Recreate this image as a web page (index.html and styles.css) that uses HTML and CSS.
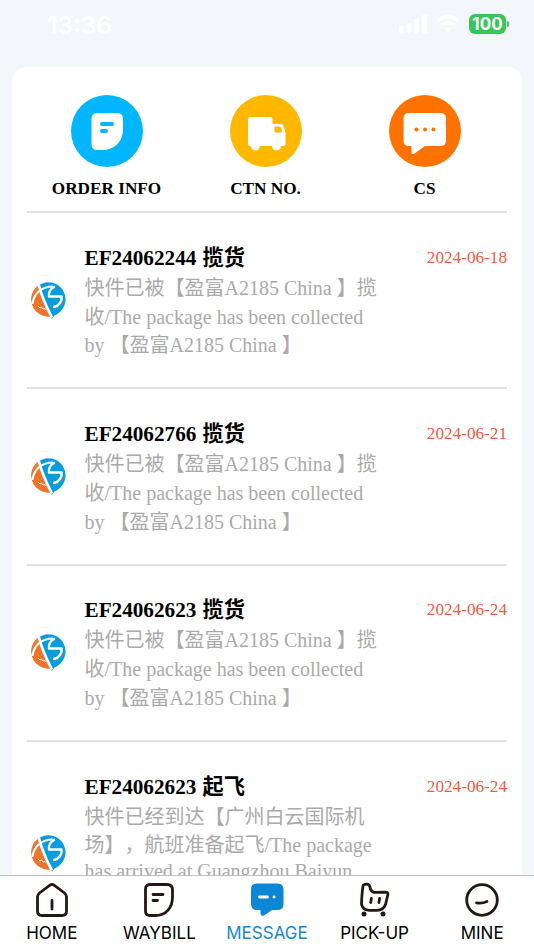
FILE: index.html
```
<!DOCTYPE html>
<html lang="zh-CN">
<head>
<meta charset="utf-8">
<title>Message</title>
<link rel="stylesheet" href="styles.css">
</head>
<body>
<svg class="defs" aria-hidden="true">
  <symbol id="logo" viewBox="0 0 36 38">
    <path d="M9 4A17.200 17.200 0 1 1 24.500 34.500L22 37.800L19 34.500Z" fill="#079be0"/>
    <path d="M9 4A17.200 17.200 0 0 0 20.500 35.500Z" fill="#ee742b"/>
    <path d="M8.500 3Q13 20 22 36.500" stroke="#fff" stroke-width="2.800" fill="none"/>
    <path d="M2.500 22C4 14 10 5.500 22.500 5.500" stroke="#fff" stroke-width="2.200" fill="none" stroke-linecap="round"/>
    <path d="M24 6C20 8 18.500 11 19 15.500H31.500C32.500 20 29 25 24 26" stroke="#fff" stroke-width="2.500" fill="none" stroke-linecap="round" stroke-linejoin="round"/>
    <path d="M8 25l2 2 1.500-1 1.500 2 2-.5 1.500 1.500" stroke="#fff" stroke-width=".9" fill="none"/>
  </symbol>
</svg>
<div class="app">
  <header class="status">
    <span class="time">13:36</span>
    <div class="signals">
      <svg width="28" height="18" viewBox="0 0 28 18" fill="#fff"><rect y="11" width="5" height="7" rx="1.500"/><rect x="7.600" y="8" width="5" height="10" rx="1.500"/><rect x="15.200" y="4" width="5" height="14" rx="1.500"/><rect x="22.800" y="0" width="5" height="18" rx="1.500"/></svg>
      <svg width="24" height="18" viewBox="0 0 24 18" fill="none" stroke="#fff" stroke-width="3.300"><path d="M1.200 6Q12-3 22.800 6M5.200 10.500Q12 5 18.800 10.500"/><path d="M8 13.500Q12 10.500 16 13.500L12 17.500Z" fill="#fff" stroke="none"/></svg>
      <div class="battery"><span class="level">100</span><i class="cap"></i></div>
    </div>
  </header>
  <main class="card">
    <nav class="shortcuts">
      <a class="shortcut"><svg viewBox="0 0 72 72"><circle cx="36" cy="36" r="36" fill="#02b5ff"/><path d="M26 18H46Q52 18 52 24V34C52 47 43 55 31 55H26Q20.500 55 20.500 49V24Q20.500 18 26 18Z" fill="#fff"/><path d="M31 29H41M31 36H35" stroke="#02b5ff" stroke-width="4" stroke-linecap="round"/></svg><b>ORDER INFO</b></a>
      <a class="shortcut"><svg viewBox="0 0 72 72"><circle cx="36" cy="36" r="36" fill="#ffb700"/><path d="M20 22H40.500Q42.500 22 42.500 24V29H50.500Q52.500 29 53.500 31L55.500 37.500V49Q55.500 51 53.500 51H51A4.500 4.500 0 0 1 42 51H30A4.500 4.500 0 0 1 21 51H20Q18 51 18 49V24Q18 22 20 22Z" fill="#fff"/><path d="M45.500 31.500H49.500Q51 31.500 51.500 34L52 37.500H45.500Q44.500 37.500 44.500 36.500V32.500Q44.500 31.500 45.500 31.500Z" fill="#ffb700"/></svg><b>CTN NO.</b></a>
      <a class="shortcut"><svg viewBox="0 0 72 72"><circle cx="36" cy="36" r="36" fill="#ff7200"/><path d="M20 18H51.500Q57 18 57 23.500V45.500Q57 51 51.500 51H36L25.500 58.500Q22.500 60 22.500 57V51H20Q14.500 51 14.500 45.500V23.500Q14.500 18 20 18Z" fill="#fff"/><g fill="#ff7200"><circle cx="27.500" cy="34.500" r="2"/><circle cx="36" cy="34.500" r="2"/><circle cx="44.500" cy="34.500" r="2"/></g></svg><b>CS</b></a>
    </nav>
    <section class="messages">
      <article class="message">
        <svg class="logo"><use href="#logo"/></svg>
        <div class="content"><h2>EF24062244 揽货</h2><p>快件已被【盈富A2185 China 】揽<br>收/The package has been collected<br>by 【盈富A2185 China 】</p></div>
        <time>2024-06-18</time>
      </article>
      <article class="message">
        <svg class="logo"><use href="#logo"/></svg>
        <div class="content"><h2>EF24062766 揽货</h2><p>快件已被【盈富A2185 China 】揽<br>收/The package has been collected<br>by 【盈富A2185 China 】</p></div>
        <time>2024-06-21</time>
      </article>
      <article class="message">
        <svg class="logo"><use href="#logo"/></svg>
        <div class="content"><h2>EF24062623 揽货</h2><p>快件已被【盈富A2185 China 】揽<br>收/The package has been collected<br>by 【盈富A2185 China 】</p></div>
        <time>2024-06-24</time>
      </article>
      <article class="message tall">
        <svg class="logo"><use href="#logo"/></svg>
        <div class="content"><h2>EF24062623 起飞</h2><p>快件已经到达【广州白云国际机<br>场】，航班准备起飞/The package<span class="last">has arrived at Guangzhou Baiyun</span></p></div>
        <time>2024-06-24</time>
      </article>
    </section>
  </main>
  <nav class="tabs">
    <a class="tab"><svg viewBox="0 0 36 36"><path d="M16 3.200Q18 1.800 20 3.200L30.500 11Q32.500 12.600 32.500 15V29Q32.500 33.500 28 33.500H8Q3.500 33.500 3.500 29V15Q3.500 12.600 5.500 11ZM18 18.500V27"/></svg><span>HOME</span></a>
    <a class="tab"><svg viewBox="0 0 36 36"><path d="M9 2.500H26Q31.500 2.500 31.500 8V15C31.500 26 25 33.500 14 33.500H9Q4.500 33.500 4.500 29V7Q4.500 2.500 9 2.500ZM12 12.500H22M12 18.500H16.500"/></svg><span>WAYBILL</span></a>
    <a class="tab active"><svg viewBox="0 0 36 36"><path class="solid" d="M8 1.500H28.500Q34.500 1.500 34.500 7.500V22Q34.500 28 28.500 28H23L15.500 33.200Q12 35 11.500 31.500V28H8Q2 28 2 22V7.500Q2 1.500 8 1.500Z"/><path class="dots" d="M10.500 15H18.500M25 15H25.100"/></svg><span>MESSAGE</span></a>
    <a class="tab"><svg viewBox="0 0 36 36"><path d="M7 2.700Q12 1 13 5Q13.500 9.500 17 10.300L28.500 10.200Q31.500 10.300 30.800 13L28.500 22.500Q26.500 28 20 28.300H12Q5.500 28 4.500 22Q5 10 6 4Q6.200 3 7 2.700ZM14.400 16.500L13.700 20.500M22.600 16.500L21.900 20.500"/><g class="wheels"><circle cx="7" cy="32" r="2.500"/><circle cx="26" cy="32" r="2.500"/></g></svg><span>PICK-UP</span></a>
    <a class="tab"><svg viewBox="0 0 36 36"><circle cx="18" cy="18" r="15.300"/><path d="M12.500 20.800Q18 21.800 23 19.400"/></svg><span>MINE</span></a>
  </nav>
</div>
</body>
</html>
```
FILE: styles.css
```
* { box-sizing: border-box; }
body { margin: 0; background: #f3f7fb; font-family: "Liberation Serif", "Noto Sans CJK SC", serif; color: #000; text-spacing-trim: space-all; }
.defs { position: absolute; width: 0; height: 0; }
.app { height: 950px; display: flex; flex-direction: column; overflow: hidden; }
.status { height: 67px; flex: none; display: flex; justify-content: space-between; align-items: flex-start; padding: 13px 25px 0 47px; font-family: Inter, sans-serif; }
.time { color: #fff; font-size: 24.500px; line-height: 24px; font-weight: 600; }
.signals { display: flex; align-items: center; gap: 9px; height: 21px; }
.battery { display: flex; align-items: center; gap: 1px; }
.level { width: 37px; height: 20px; border-radius: 6px; background: #35c759; color: #fff; font-size: 17px; line-height: 20px; font-weight: 700; text-align: center; }
.cap { width: 2px; height: 6px; border-radius: 0 3px 3px 0; background: #35c759; }
.card { flex: 1; min-height: 0; overflow: hidden; margin: 0 12px; padding: 0 15px; background: #fff; border-radius: 14px 14px 0 0; }
.shortcuts { height: 146px; padding-top: 28px; display: grid; grid-template-columns: repeat(3, 159px); border-bottom: 2px solid #e2e2e2; }
.shortcut { display: flex; flex-direction: column; align-items: center; }
.shortcut svg { width: 72px; height: 72px; }
.shortcut b { margin-top: 11px; font-size: 17.200px; line-height: 21px; white-space: nowrap; }
.message { height: 176.300px; border-bottom: 2px solid #e2e2e2; display: flex; align-items: flex-start; padding-top: 29.800px; }
.logo { flex: none; width: 36px; height: 38px; margin: 38px 19px 0 2.500px; }
.content { flex: 1; white-space: nowrap; }
h2 { margin: 0; font-size: 21.200px; line-height: 30px; word-spacing: 1px; }
p { margin: 1px 0 0; color: #aaa; font-size: 20px; line-height: 28.800px; }
.last { display: block; margin-top: -3px; }
time { color: #f05a42; font-size: 17.200px; line-height: 30px; }
.tall { height: 240px; }
.tall .logo { margin-top: 62px; }
.tabs { flex: none; height: 75px; border-top: 1px solid #bfbfbf; background: #fff; display: flex; padding: 6px 0 0; margin: 0 -2px; }
.tab { flex: 1; display: flex; flex-direction: column; align-items: center; font: 17px/22px Inter, sans-serif; }
.tab svg { width: 36px; height: 36px; fill: none; stroke: #231815; stroke-width: 2.800; stroke-linecap: round; stroke-linejoin: round; }
.tab span { margin-top: 3.500px; }
.active { color: #1787d4; }
.tab .solid { fill: #0d86d5; stroke: none; }
.tab .dots { stroke: #fff; }
.wheels { fill: #231815; stroke: none; }
```
